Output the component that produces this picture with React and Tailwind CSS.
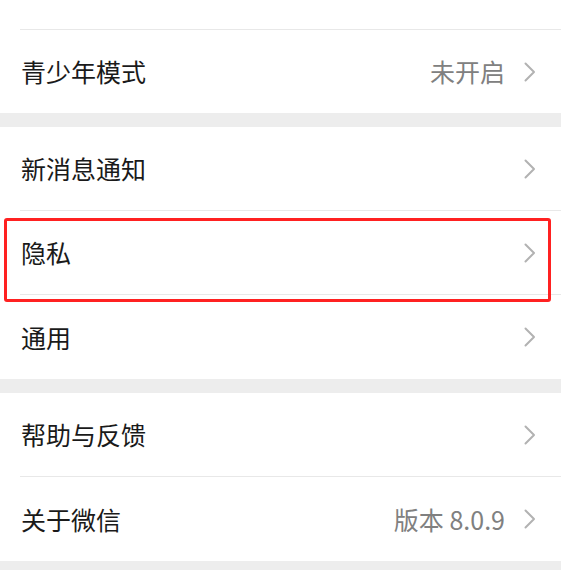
import React from 'react';

const font = { fontFamily: '"Noto Sans CJK SC", "Noto Sans", sans-serif' };

function Chevron() {
  return (
    <svg width="12" height="20" viewBox="0 0 12 20" className="shrink-0">
      <polyline
        points="1.5,1.5 10,10 1.5,18.5"
        fill="none"
        stroke="#b2b2b2"
        strokeWidth="2"
        strokeLinecap="round"
        strokeLinejoin="round"
      />
    </svg>
  );
}

function Row({ label, value, divider, highlight, tall }) {
  return (
    <div className="relative">
      <div className={`flex items-center pl-[21px] pr-[25px] ${tall ? 'h-[84px]' : 'h-[83px]'}`}>
        <span className="text-[25px] text-[#1a1a1a] leading-none flex-1">{label}</span>
        {value && (
          <span className="text-[25px] text-[#808080] leading-none mr-[19px]">{value}</span>
        )}
        <Chevron />
      </div>
      {divider && <div className="ml-[20px] h-px bg-[#e8e8e8]" />}
      {/* red highlight frame */}
      {highlight && (
        <div className="absolute left-[4px] top-[7px] w-[547px] h-[84px] border-[3px] border-[#ff2121] rounded-[3px] pointer-events-none" />
      )}
    </div>
  );
}

export default function App() {
  return (
    <div className="w-[561px] h-[570px] bg-[#ededed] overflow-hidden" style={font}>
      <div className="bg-white">
        <div className="h-[29px]" />
        <div className="ml-[20px] h-px bg-[#e8e8e8]" />
        <Row label="青少年模式" value="未开启" />
      </div>

      <div className="h-[14px]" />

      <div className="bg-white">
        <Row label="新消息通知" divider />
        <Row label="隐私" divider highlight />
        <Row label="通用" tall />
      </div>

      <div className="h-[14px]" />

      <div className="bg-white">
        <Row label="帮助与反馈" divider />
        <Row label="关于微信" value="版本 8.0.9" tall />
      </div>
    </div>
  );
}
